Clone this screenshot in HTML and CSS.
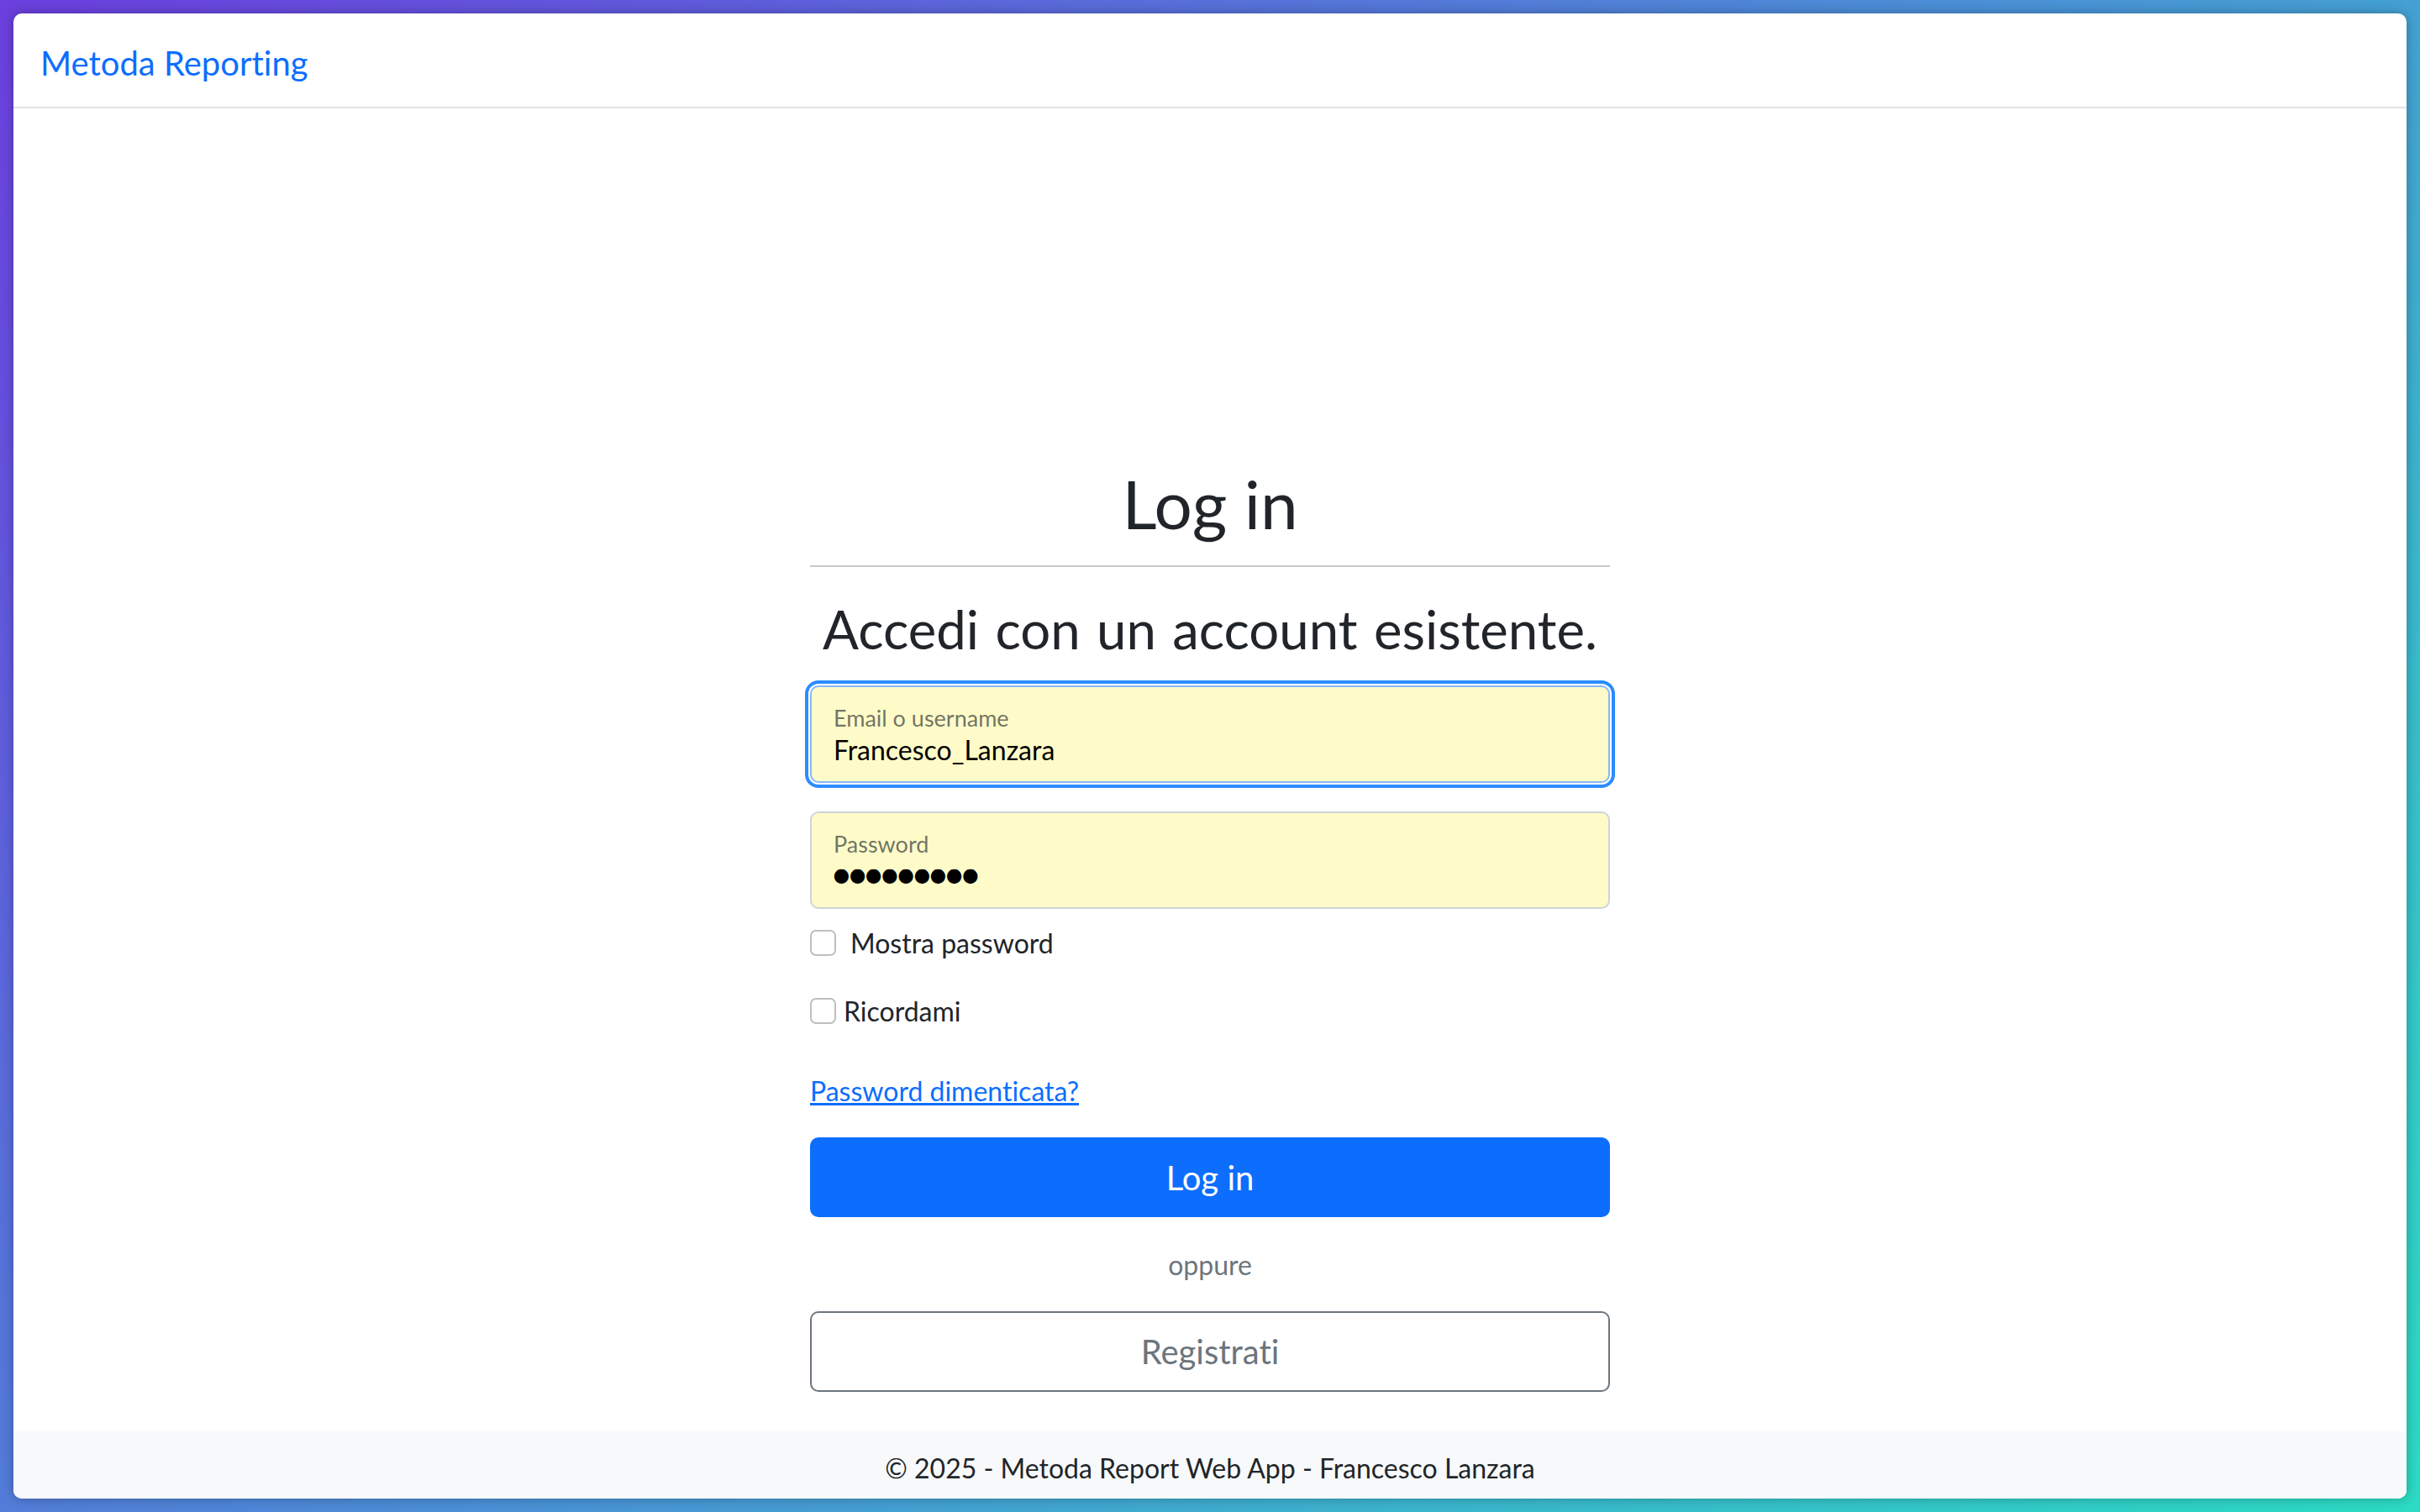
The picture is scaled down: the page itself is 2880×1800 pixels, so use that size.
FILE: index.html
```html
<!DOCTYPE html>
<html lang="it">
<head>
<meta charset="utf-8">
<title>Log in - Metoda Reporting</title>
<link rel="stylesheet" href="styles.css">
</head>
<body>
<div class="window">
  <header class="navbar">
    <a class="brand" href="#">Metoda Reporting</a>
  </header>
  <main class="main">
    <section class="login">
      <h1 class="title">Log in</h1>
      <hr class="divider">
      <h2 class="subtitle">Accedi con un account esistente.</h2>
      <form class="form">
        <div class="field field-focus">
          <label class="field-label" for="user">Email o username</label>
          <input class="field-input" id="user" type="text" value="Francesco_Lanzara" readonly>
        </div>
        <div class="field">
          <label class="field-label" for="pwd">Password</label>
          <input class="field-input field-password" id="pwd" type="password" value="123456789" readonly>
        </div>
        <label class="check check-show">
          <input class="check-box" type="checkbox">
          <span>Mostra password</span>
        </label>
        <label class="check check-remember">
          <input class="check-box" type="checkbox">
          <span>Ricordami</span>
        </label>
        <div class="forgot"><a class="link" href="#">Password dimenticata?</a></div>
        <button class="btn btn-primary" type="button">Log in</button>
        <p class="or">oppure</p>
        <button class="btn btn-outline" type="button">Registrati</button>
      </form>
    </section>
  </main>
  <footer class="footer">© 2025 - Metoda Report Web App - Francesco Lanzara</footer>
</div>
</body>
</html>
```

FILE: styles.css
```css
* { box-sizing: border-box; }
html, body { margin: 0; }
body {
  height: 1800px;
  padding: 16px;
  font-family: Lato, "Noto Sans", sans-serif;
  font-variant-ligatures: none;
  color: #212529;
  background: linear-gradient(135deg, #6b3fde 0%, #4b8fd6 50%, #2bdbc3 100%);
}
.window {
  height: 1768px;
  background: #fff;
  border-radius: 10px;
  overflow: hidden;
  display: flex;
  flex-direction: column;
  box-shadow: 0 0 14px rgba(0, 0, 0, 0.28);
}
.navbar {
  height: 113px;
  flex: none;
  border-bottom: 2px solid #dee2e6;
  display: flex;
  align-items: center;
  padding: 6px 32px 0;
}
.brand {
  color: #0d6efd;
  font-size: 40px;
  text-decoration: none;
}
.main {
  flex: 1;
  display: flex;
  justify-content: center;
  padding-top: 420px;
}
.login { width: 952px; }
.title {
  margin: 0;
  font-size: 80px;
  font-weight: 400;
  line-height: 100px;
  text-align: center;
}
.divider {
  margin: 24px 0 0;
  border: 0;
  border-top: 2px solid #c8c9ca;
}
.subtitle {
  margin: 29px 0 0;
  font-size: 63.5px;
  font-weight: 400;
  line-height: 90px;
  text-align: center;
  word-spacing: 0.05em;
}
.form {
  margin-top: 22px;
  display: flex;
  flex-direction: column;
}
.field {
  height: 116px;
  display: flex;
  flex-direction: column;
  padding: 20px 26px 0;
  background: #fefbc8;
  border: 2px solid #ced4da;
  border-radius: 10px;
}
.field + .field { margin-top: 34px; }
.field-focus {
  border-color: #86b7fe;
  box-shadow: 0 0 0 2px #fff, 0 0 0 6px #2b8cff;
}
.field-label {
  font-size: 27px;
  line-height: 34px;
  color: rgba(33, 37, 41, 0.65);
}
.field-input {
  margin-top: 1px;
  height: 40px;
  padding: 0;
  border: 0;
  outline: 0;
  background: transparent;
  font-family: inherit;
  font-size: 32px;
  line-height: 40px;
  color: #000;
}
.field-password {
  margin: -3px 0 0 -4px;
  font-size: 46px;
  letter-spacing: -7.5px;
}
.check {
  display: flex;
  align-items: center;
  height: 40px;
  font-size: 32px;
}
.check-show { margin-top: 20px; gap: 17px; }
.check-remember { margin-top: 41px; gap: 9px; }
.check-box {
  appearance: none;
  margin: 0;
  width: 31px;
  height: 31px;
  border: 2px solid #bfbfbf;
  border-radius: 7px;
  background: #fff;
}
.forgot {
  margin-top: 56px;
  line-height: 40px;
  font-size: 32px;
}
.link { color: #0d6efd; text-decoration: underline; }
.btn {
  width: 100%;
  font-family: inherit;
  font-variant-ligatures: none;
  font-size: 40px;
  border-radius: 10px;
  cursor: pointer;
}
.btn-primary {
  margin-top: 35px;
  height: 95px;
  border: 0;
  background: #0d6efd;
  color: #fff;
}
.or {
  margin: 37px 0 0;
  line-height: 40px;
  font-size: 32px;
  text-align: center;
  color: #6c757d;
}
.btn-outline {
  margin-top: 35px;
  height: 96px;
  border: 2px solid #6c757d;
  background: #fff;
  color: #6c757d;
}
.footer {
  height: 80px;
  flex: none;
  display: flex;
  align-items: center;
  justify-content: center;
  padding-top: 6px;
  background: #f8f9fa;
  font-size: 32px;
}
```
